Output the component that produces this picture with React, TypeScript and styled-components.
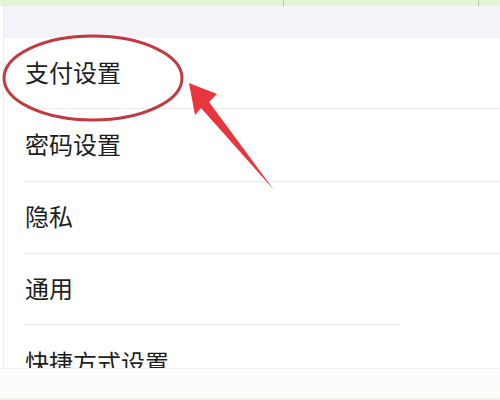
import styled, { createGlobalStyle } from 'styled-components'

const Global = createGlobalStyle`
  html, body {
    margin: 0;
    padding: 0;
    background: #ffffff;
  }
  body {
    font-family: "Noto Sans CJK SC", "Noto Sans", sans-serif;
  }
`

const Screen = styled.div`
  position: relative;
  width: 500px;
  height: 400px;
  overflow: hidden;
  background: #ffffff;
  display: flex;
  flex-direction: column;
`

const TopStrip = styled.div`
  height: 6px;
  background: #e4f5d8;
  display: flex;
  flex-shrink: 0;
`

const StripCell = styled.div<{ $w: number }>`
  width: ${p => p.$w}px;
  border-right: 1px solid #b8c7ae;
  flex-shrink: 0;
`

const GrayBand = styled.div`
  height: 32px;
  background: #f4f4f8;
  border-left: 1px solid #ececef;
  margin-left: 3px;
  flex-shrink: 0;
`

const List = styled.div`
  flex: 1;
  margin-left: 3px;
  border-left: 1px solid #eeeeee;
  display: flex;
  flex-direction: column;
  overflow: hidden;
`

const Row = styled.div<{ $h: number }>`
  height: ${p => p.$h}px;
  box-sizing: border-box;
  padding-bottom: 4px;
  flex-shrink: 0;
  display: flex;
  align-items: center;
  padding-left: 21px;
  font-size: 24px;
  color: #1e1e1e;
`

const Divider = styled.div<{ $end?: number }>`
  height: 1px;
  flex-shrink: 0;
  margin-left: 21px;
  width: ${p => (p.$end ? `${p.$end}px` : 'auto')};
  background: #ebebeb;
`

const LastRow = styled(Row)`
  align-items: flex-start;
  padding-top: 19px;
  padding-bottom: 0;
  overflow: hidden;
`

const BottomBar = styled.div`
  height: 32px;
  flex-shrink: 0;
  background: #fcfcfa;
  border-top: 1px solid #f0f0ee;
  border-bottom: 2px solid #f1f0e6;
  box-sizing: border-box;
`

const Overlay = styled.svg`
  position: absolute;
  left: 0;
  top: 0;
  pointer-events: none;
`

export default function App() {
  return (
    <>
      <Global />
      <Screen>
        <TopStrip>
          <StripCell $w={283} />
          <StripCell $w={194} />
        </TopStrip>
        <GrayBand />
        <List>
          <Row $h={70}>支付设置</Row>
          <Divider />
          <Row $h={72}>密码设置</Row>
          <Divider />
          <Row $h={71}>隐私</Row>
          <Divider />
          <Row $h={70}>通用</Row>
          <Divider $end={376} />
          <LastRow $h={44}>快捷方式设置</LastRow>
        </List>
        <BottomBar />
        <Overlay width="500" height="400" viewBox="0 0 500 400">
          <ellipse cx="93" cy="78" rx="89" ry="42" fill="none" stroke="#c23a40" strokeWidth="3" />
          <polygon
            points="189,83 217,94 209,102 274,190 201,108 195,115"
            fill="#e9363c"
          />
        </Overlay>
      </Screen>
    </>
  )
}
